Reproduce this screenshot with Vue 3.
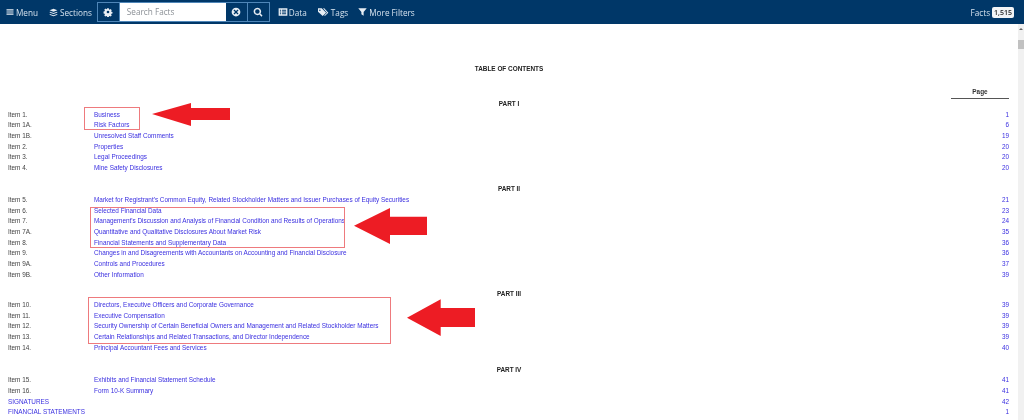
<script setup>
const sections = [
  { title: 'PART I', cls: 'first', rows: [
    ['Item 1.', 'Business', '1'], ['Item 1A.', 'Risk Factors', '6'], ['Item 1B.', 'Unresolved Staff Comments', '19'],
    ['Item 2.', 'Properties', '20'], ['Item 3.', 'Legal Proceedings', '20'], ['Item 4.', 'Mine Safety Disclosures', '20'] ] },
  { title: 'PART II', cls: 'second', rows: [
    ['Item 5.', "Market for Registrant's Common Equity, Related Stockholder Matters and Issuer Purchases of Equity Securities", '21'],
    ['Item 6.', 'Selected Financial Data', '23'],
    ['Item 7.', "Management's Discussion and Analysis of Financial Condition and Results of Operations", '24'],
    ['Item 7A.', 'Quantitative and Qualitative Disclosures About Market Risk', '35'],
    ['Item 8.', 'Financial Statements and Supplementary Data', '36'],
    ['Item 9.', 'Changes in and Disagreements with Accountants on Accounting and Financial Disclosure', '36'],
    ['Item 9A.', 'Controls and Procedures', '37'], ['Item 9B.', 'Other Information', '39'] ] },
  { title: 'PART III', cls: 'third', rows: [
    ['Item 10.', 'Directors, Executive Officers and Corporate Governance', '39'],
    ['Item 11.', 'Executive Compensation', '39'],
    ['Item 12.', 'Security Ownership of Certain Beneficial Owners and Management and Related Stockholder Matters', '39'],
    ['Item 13.', 'Certain Relationships and Related Transactions, and Director Independence', '39'],
    ['Item 14.', 'Principal Accountant Fees and Services', '40'] ] },
  { title: 'PART IV', cls: 'fourth', rows: [
    ['Item 15.', 'Exhibits and Financial Statement Schedule', '41'], ['Item 16.', 'Form 10-K Summary', '41'] ] },
]
</script>

<template>
  <div class="page">
    <header class="bar">
      <span class="nav"><svg viewBox="0 0 16 16" class="ic"><path d="M1 2.5h14v2.4H1zM1 6.800h14v2.400H1zM1 11.100h14v2.400H1z"/></svg>Menu</span>
      <span class="nav sections"><svg viewBox="0 0 16 16" class="ic stack"><path d="M8 1.200 15 4 8 6.800 1 4zM1.600 6.600 8 9.100l6.400-2.500L15 8l-7 2.800L1 8zM1.600 10.600 8 13.100l6.400-2.500L15 12l-7 2.800L1 12z"/></svg>Sections</span>
      <div class="search">
        <span class="sbtn gear"><svg viewBox="0 0 16 16" class="ic big"><path fill-rule="evenodd" d="M6.500 1h3l.4 2 1.300.6 1.800-1.100 2 2.100-1.100 1.800.5 1.200 2 .4v3l-2 .4-.5 1.200 1.100 1.800-2 2.100-1.800-1.100-1.300.6-.4 2h-3l-.4-2-1.300-.6-1.800 1.100-2-2.100 1.100-1.800-.5-1.200-2-.4V7l2-.4.5-1.200-1.100-1.800 2-2.100 1.800 1.100 1.300-.6zM8 5.500a2.500 2.500 0 1 0 0 5 2.500 2.500 0 0 0 0-5z" transform="translate(1.200 1.200) scale(.85)"/></svg></span>
        <span class="input">Search Facts</span>
        <span class="sbtn clear"><svg viewBox="0 0 16 16" class="ic big"><path fill-rule="evenodd" d="M8 1a7 7 0 1 0 0 14A7 7 0 0 0 8 1zM5.500 4 8 6.500 10.500 4 12 5.500 9.500 8l2.500 2.500-1.500 1.500L8 9.500 5.500 12 4 10.500 6.500 8 4 5.500z"/></svg></span>
        <span class="sbtn find"><svg viewBox="0 0 16 16" class="ic big"><path fill-rule="evenodd" d="M7 1a6 6 0 0 1 4.900 9.400l3.300 3.300-1.700 1.700-3.300-3.300A6 6 0 1 1 7 1zm0 2.400a3.600 3.600 0 1 0 0 7.200 3.600 3.600 0 0 0 0-7.200z"/></svg></span>
      </div>
      <span class="nav data"><svg viewBox="0 0 16 16" class="ic dat"><path fill-rule="evenodd" d="M1 2h14v12H1zM3 4.500v1.500h2V4.500zm3.500 0v1.500H13V4.500zM3 7.300v1.500h2V7.300zm3.500 0v1.500H13V7.300zM3 10.100v1.500h2v-1.500zm3.500 0v1.500H13v-1.500z"/></svg>Data</span>
      <span class="nav tags"><svg viewBox="0 0 18 16" class="ic wide"><path fill-rule="evenodd" d="M1 2h6l7 7-5.500 5.500L1 7.500zM4 4a1.200 1.200 0 1 0 0 2.400A1.200 1.200 0 0 0 4 4z"/><path d="M9 2h2l6.500 7-5.500 5.500-1-1 4.300-4.500z"/></svg>Tags</span>
      <span class="nav filters"><svg viewBox="0 0 16 16" class="ic filt"><path d="M.5 1.500h15L10 8v6.500L6 12V8z"/></svg>More Filters</span>
      <span class="facts">Facts <b>1,515</b></span>
    </header>

    <main class="doc">
      <h1 class="toc">TABLE OF CONTENTS</h1>
      <div class="pagehead"><span>Page</span></div>
      <section v-for="s in sections" :key="s.title" :class="['part', s.cls]">
        <h2>{{ s.title }}</h2>
        <div v-for="r in s.rows" :key="r[0]" class="row">
          <span>{{ r[0] }}</span><a>{{ r[1] }}</a><a class="num">{{ r[2] }}</a>
        </div>
      </section>
      <div class="solo"><a>SIGNATURES</a><a class="num">42</a></div>
      <div class="solo"><a>FINANCIAL STATEMENTS</a><a class="num">1</a></div>

      <i class="box b1"></i><i class="box b2"></i><i class="box b3"></i>
      <svg class="arrows" viewBox="0 0 1018 396" width="1018" height="396">
        <g transform="translate(0 -24)" fill="#ed1c24">
          <path d="M152 114 191 103V108H230V120H191V126Z"/>
          <path d="M354 225.700 390 208V216.700H427V235H390V244Z"/>
          <path d="M407 317.700 440.700 299.300V308H475V327H440.700V336Z"/>
        </g>
      </svg>
    </main>

    <aside class="scroll"><i class="up"></i><i class="thumb"></i></aside>
  </div>
</template>

<style>
html, body { margin: 0; background: #fff; }
</style>

<style scoped>
.page { position: relative; width: 1024px; height: 420px; overflow: hidden; background: #fff; display: grid; grid-template-columns: 1018px 6px; grid-template-rows: 24px 396px; }
.bar { grid-column: 1 / 3; display: flex; align-items: center; background: #003768; color: #d5e2ee; font: 8.200px "Open Sans", sans-serif; padding: 0 10px 0 6px; filter: blur(.25px); }
.nav { display: flex; align-items: center; gap: 2px; white-space: nowrap; }
.ic { width: 8px; height: 8px; fill: #e8eef4; flex: none; }
.ic.stack { width: 9px; height: 9px; }
.ic.dat { width: 10px; height: 10px; margin-right: -1px; }
.ic.big { width: 10px; height: 10px; }
.ic.wide { width: 12px; height: 10px; }
.ic.filt { width: 9px; height: 10px; }
.sections { margin-left: 11px; }
.search { display: flex; height: 20px; margin-left: 5px; border: 1px solid #4f86b8; box-sizing: border-box; width: 173px; }
.sbtn { width: 21px; flex: none; display: flex; align-items: center; justify-content: center; }
.gear { border-right: 1px solid #4f86b8; }
.find { border-left: 1px solid #4f86b8; }
.input { flex: 1; background: #fff; color: #8a8f95; padding-left: 7px; line-height: 18px; }
.data { margin-left: 8px; }
.tags { margin-left: 10px; }
.filters { margin-left: 10px; }
.facts { margin-left: auto; display: flex; align-items: center; gap: 2px; }
.facts b { background: #f2f4f6; color: #222; font: 600 7px "Open Sans", sans-serif; padding: 1px 2px; border-radius: 2px; }

.doc { position: relative; font: 6.400px/10.670px "Liberation Sans", Arial, sans-serif; color: #444; padding-top: 40px; filter: blur(.4px); }
.toc, h2 { margin: 0; font: 700 6.400px/10.670px "Liberation Sans", Arial, sans-serif; color: #222; text-align: center; }
.pagehead { display: flex; justify-content: flex-end; margin-top: 12.500px; padding-right: 9px; }
.pagehead span { width: 58px; box-sizing: border-box; text-align: center; font-weight: 700; color: #333; border-bottom: 1px solid #555; }
.part.first { margin-top: .3px; }
.part.second { margin-top: 10.700px; }
.part.third { margin-top: 9px; }
.part.fourth { margin-top: 11.400px; }
.row { display: grid; grid-template-columns: 86px 1fr 40px; padding: 0 9px 0 8px; height: 10.670px; }
a { color: #3a2fe0; }
.num { text-align: right; }
.solo { display: flex; justify-content: space-between; padding: 0 9px 0 8px; height: 10.670px; }
.box { position: absolute; border: 1px solid #ee7a7d; box-sizing: border-box; }
.b1 { left: 84px; top: 83px; width: 56px; height: 23px; }
.b2 { left: 90px; top: 183px; width: 255px; height: 41px; }
.b3 { left: 88px; top: 273px; width: 303px; height: 47px; }
.arrows { position: absolute; left: 0; top: 0; }

.scroll { position: relative; background: #f1f1f1; }
.up { position: absolute; left: 1px; top: 4px; border: 2px solid transparent; border-top: 0; border-bottom: 2px solid #666; }
.thumb { position: absolute; left: 0; top: 16px; width: 6px; height: 9px; background: #c1c1c1; }
</style>
